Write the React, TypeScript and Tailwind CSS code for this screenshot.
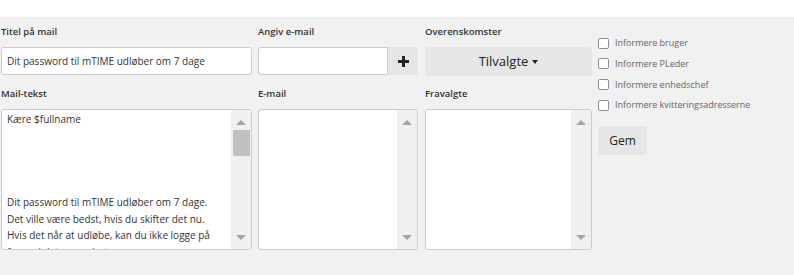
import React from 'react';

const ScrollArea = ({ children, thumb }: { children?: React.ReactNode; thumb?: boolean }) => (
    <div className="flex h-[141px] rounded-[3px] border border-[#cccccc] bg-white overflow-hidden">
        <div className="flex-1 overflow-hidden px-[5px] pt-[1px] text-[10px] leading-[16.6px] text-[#333]">
            {children}
        </div>
        {/* fake scrollbar */}
        <div className="w-[20px] bg-[#f0f0f0] flex flex-col items-center relative">
            <div className="mt-[10px] w-0 h-0 border-x-[5px] border-x-transparent border-b-[5px] border-b-[#a3a3a3]" />
            {thumb && <div className="mt-[5px] w-[17px] h-[26px] bg-[#c1c1c1]" />}
            <div className="mt-auto mb-[9px] w-0 h-0 border-x-[5px] border-x-transparent border-t-[5px] border-t-[#a3a3a3]" />
        </div>
    </div>
);

const Label = ({ children }: { children: React.ReactNode }) => (
    <div className="h-[29px] flex items-center text-[9.5px] font-semibold text-[#333]">{children}</div>
);

export default function App() {
    const checks = ['Informere bruger', 'Informere PLeder', 'Informere enhedschef', 'Informere kvitteringsadresserne'];

    return (
        <div className="w-[794px] h-[275px] bg-white font-['Open_Sans',sans-serif]">
            <div className="h-[17px]" />
            <div className="h-[258px] bg-[#f1f1f1] flex pl-[1px]">
                {/* column 1 */}
                <div className="w-[251px] pt-[1px]">
                    <Label>Titel på mail</Label>
                    <div className="h-[28px] rounded-[3px] border border-[#cccccc] bg-white flex items-center px-[5px] text-[10px] text-[#333]">
                        Dit password til mTIME udløber om 7 dage
                    </div>
                    <div className="mt-[5px]">
                        <Label>Mail-tekst</Label>
                    </div>
                    <ScrollArea thumb>
                        <p>Kære $fullname</p>
                        <p>&nbsp;</p>
                        <p>&nbsp;</p>
                        <p>&nbsp;</p>
                        <p>&nbsp;</p>
                        <p className="whitespace-nowrap">Dit password til mTIME udløber om 7 dage.</p>
                        <p className="whitespace-nowrap">Det ville være bedst, hvis du skifter det nu.</p>
                        <p className="whitespace-nowrap">Hvis det når at udløbe, kan du ikke logge på</p>
                        <p className="whitespace-nowrap">før end det er ændret.</p>
                    </ScrollArea>
                </div>

                {/* column 2 */}
                <div className="w-[160px] ml-[6px] pt-[1px]">
                    <Label>Angiv e-mail</Label>
                    <div className="flex h-[28px]">
                        <div className="w-[130px] rounded-l-[3px] border border-[#cccccc] bg-white" />
                        <button className="flex-1 rounded-r-[3px] bg-[#e6e6e6] flex items-center justify-center text-[#222]">
                            <svg width="11" height="11" viewBox="0 0 11 11">
                                <path d="M4 0h3v4h4v3H7v4H4V7H0V4h4z" fill="#222" />
                            </svg>
                        </button>
                    </div>
                    <div className="mt-[5px]">
                        <Label>E-mail</Label>
                    </div>
                    <ScrollArea />
                </div>

                {/* column 3 */}
                <div className="w-[167px] ml-[7px] pt-[1px]">
                    <Label>Overenskomster</Label>
                    <button className="w-full h-[29px] rounded-[3px] bg-[#e6e6e6] flex items-center justify-center gap-[4px] text-[13px] text-[#222]">
                        Tilvalgte
                        <span className="w-0 h-0 border-x-[3.5px] border-x-transparent border-t-[4px] border-t-[#222] mt-[1px]" />
                    </button>
                    <div className="mt-[4px]">
                        <Label>Fravalgte</Label>
                    </div>
                    <ScrollArea />
                </div>

                {/* column 4 */}
                <div className="ml-[6px] pt-[20px]">
                    <div className="flex flex-col gap-[8.7px]">
                        {checks.map(c => (
                            <label key={c} className="flex items-center gap-[6px] h-[12px] text-[9px] text-[#666]">
                                <span className="w-[11px] h-[11px] rounded-[2px] border border-[#8f8f8f] bg-white" />
                                {c}
                            </label>
                        ))}
                    </div>
                    <button className="mt-[15px] w-[49px] h-[29px] rounded-[3px] bg-[#e6e6e6] text-[12px] text-[#222]">
                        Gem
                    </button>
                </div>
            </div>
        </div>
    );
}
